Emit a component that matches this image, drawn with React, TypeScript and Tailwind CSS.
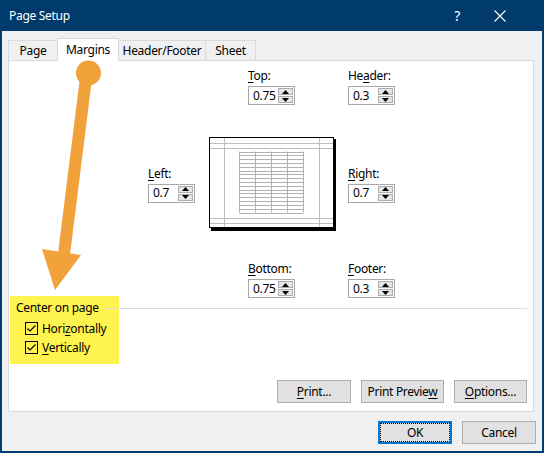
import React from "react";

const Acc = ({ text, at }: { text: string; at: number }) => (
  <span>
    {text.slice(0, at)}
    <span className="underline underline-offset-2">{text[at]}</span>
    {text.slice(at + 1)}
  </span>
);

const Arrow = ({ up }: { up?: boolean }) => (
  <svg width="7" height="4" viewBox="0 0 7 4">
    {up ? <polygon points="0,4 7,4 3.5,0" fill="#000" /> : <polygon points="0,0 7,0 3.5,4" fill="#000" />}
  </svg>
);

const Spin = ({ value }: { value: string }) => (
  <div className="flex h-[19px] w-[47px] items-center border border-[#a8a8a8] bg-white">
    <span className="flex-1 pl-[4px] text-[12px] leading-none">{value}</span>
    <div className="flex h-full w-[16px] flex-col gap-px py-px pr-px">
      <div className="flex flex-1 items-center justify-center border border-[#adadad] bg-[#e5e5e5]">
        <Arrow up />
      </div>
      <div className="flex flex-1 items-center justify-center border border-[#adadad] bg-[#e5e5e5]">
        <Arrow />
      </div>
    </div>
  </div>
);

const Field = ({ label, at, value }: { label: string; at: number; value: string }) => (
  <div className="flex flex-col">
    <div className="h-[16px] text-[12px] leading-[16px]">
      <Acc text={label} at={at} />
    </div>
    <div className="mt-[2px]">
      <Spin value={value} />
    </div>
  </div>
);

const Preview = () => {
  const rows = Array.from({ length: 17 }, (_, i) => 14.5 + i * (61 / 16));
  const cols = [30.5, 46.5, 62.5, 78.5, 94.5];
  return (
    <svg width="128" height="94" viewBox="0 0 128 94">
      <rect x="2" y="2" width="125" height="92" fill="#000" />
      <rect x="0.5" y="0.5" width="124" height="90" fill="#fff" stroke="#000" />
      <g stroke="#bdbdbd" strokeWidth="1">
        <line x1="15.5" y1="1" x2="15.5" y2="90" />
        <line x1="110.5" y1="1" x2="110.5" y2="90" />
        <line x1="1" y1="6.5" x2="124" y2="6.5" />
        <line x1="1" y1="11.5" x2="124" y2="11.5" />
        <line x1="1" y1="81.5" x2="124" y2="81.5" />
        <line x1="1" y1="86.5" x2="124" y2="86.5" />
      </g>
      <g stroke="#b3b3b3" strokeWidth="1">
        {rows.map((y, i) => (
          <line key={i} x1="30.5" y1={Math.round(y) + 0.5} x2="94.5" y2={Math.round(y) + 0.5} />
        ))}
        {cols.map((x, i) => (
          <line key={i} x1={x} y1="14.5" x2={x} y2="75.5" />
        ))}
      </g>
    </svg>
  );
};

const Button = ({ children, w, focused }: { children: React.ReactNode; w: string; focused?: boolean }) => (
  <div
    className={`flex h-[23px] items-center justify-center bg-[#e1e1e1] text-[12px] ${w} ${
      focused ? "border-2 border-[#0078d7]" : "border border-[#adadad]"
    }`}
  >
    {focused ? (
      <div className="flex h-full w-full items-center justify-center border border-dotted border-black">{children}</div>
    ) : (
      children
    )}
  </div>
);

const Tab = ({ label, w, active }: { label: string; w: string; active?: boolean }) =>
  active ? (
    <div
      className={`relative z-10 -mb-px flex h-[23px] items-center justify-center border border-b-0 border-[#d9d9d9] bg-white text-[12px] ${w}`}
    >
      {label}
    </div>
  ) : (
    <div
      className={`flex h-[20px] items-center justify-center border border-b-0 border-[#d9d9d9] bg-[#f0f0f0] pt-[1px] text-[12px] ${w}`}
    >
      {label}
    </div>
  );

export default function App() {
  return (
    <div className="relative flex h-[453px] w-[544px] flex-col bg-[#003b6b] font-['Noto_Sans',sans-serif] tracking-[-0.3px] text-black">
      {/* title bar */}
      <div className="flex h-[31px] items-center text-white">
        <span className="ml-[9px] flex-1 text-[12px]">Page Setup</span>
        <span className="mr-[34px] text-[14px]">?</span>
        <svg width="12" height="12" viewBox="0 0 12 12" className="mr-[38px]">
          <path d="M0.5 0.5 L11.5 11.5 M11.5 0.5 L0.5 11.5" stroke="#fff" strokeWidth="1.1" />
        </svg>
      </div>

      {/* body */}
      <div className="mx-[2px] mb-[2px] flex flex-1 flex-col bg-[#f0f0f0] pt-[7px]">
        <div className="flex items-end pl-[6px]">
          <Tab label="Page" w="w-[50px]" />
          <Tab label="Margins" w="w-[62px] -ml-px" active />
          <Tab label="Header/Footer" w="w-[88px] -ml-px" />
          <Tab label="Sheet" w="w-[51px] -ml-px" />
        </div>

        <div className="ml-[6px] mr-[8px] flex h-[352px] flex-col border border-[#d9d9d9] bg-white pt-[7px] pb-[8px]">
          {/* margins grid */}
          <div className="ml-[139px] grid grid-cols-[61px_139px_60px]">
            <div />
            <div className="pl-[39px]">
              <Field label="Top:" at={0} value="0.75" />
            </div>
            <Field label="Header:" at={2} value="0.3" />

            <div className="mt-[32px] self-center">
              <Field label="Left:" at={0} value="0.7" />
            </div>
            <div className="mt-[32px]">
              <Preview />
            </div>
            <div className="mt-[32px] self-center">
              <Field label="Right:" at={0} value="0.7" />
            </div>

            <div />
            <div className="mt-[30px] pl-[39px]">
              <Field label="Bottom:" at={0} value="0.75" />
            </div>
            <div className="mt-[30px]">
              <Field label="Footer:" at={0} value="0.3" />
            </div>
          </div>

          {/* center on page */}
          <div className="relative mt-[2px]">
            <div className="absolute left-[1px] top-[-4px] h-[68px] w-[109px] bg-[#fff34f]" />
            <div className="relative flex h-[16px] items-center pl-[7px]">
              <span className="text-[12px] leading-[16px]">Center on page</span>
              <div className="ml-[6px] mr-[6px] h-px flex-1 bg-[#dcdcdc]" />
            </div>
            <div className="relative mt-[3px] flex flex-col pl-[16px]">
              {[
                { t: "Horizontally", a: 4 },
                { t: "Vertically", a: 0 },
              ].map((c) => (
                <div key={c.t} className="flex h-[19px] items-center">
                  <svg width="13" height="13" viewBox="0 0 13 13">
                    <rect x="0.5" y="0.5" width="12" height="12" fill="none" stroke="#000" />
                    <path d="M2.5 6.5 L5 9 L10.5 3.5" fill="none" stroke="#000" strokeWidth="1.2" />
                  </svg>
                  <span className="ml-[4px] text-[12px]">
                    <Acc text={c.t} at={c.a} />
                  </span>
                </div>
              ))}
            </div>
          </div>

          <div className="mt-auto flex justify-end gap-[10px] pr-[6px]">
            <Button w="w-[74px]">
              <Acc text="Print..." at={0} />
            </Button>
            <Button w="w-[83px]">
              <Acc text="Print Preview" at={12} />
            </Button>
            <Button w="w-[73px]">
              <Acc text="Options..." at={0} />
            </Button>
          </div>
        </div>

        <div className="flex flex-1 items-start justify-end gap-[10px] pr-[6px] pt-[9px]">
          <Button w="w-[74px]" focused>
            OK
          </Button>
          <Button w="w-[74px]">Cancel</Button>
        </div>
      </div>

      {/* annotation arrow */}
      <svg className="pointer-events-none absolute inset-0 z-20" width="544" height="453" viewBox="0 0 544 453">
        <line x1="86" y1="78" x2="64" y2="254" stroke="#f2a23a" strokeWidth="12" />
        <circle cx="88.5" cy="73" r="12.5" fill="#f2a23a" />
        <polygon points="42,249 81,255 55,290" fill="#f2a23a" />
      </svg>
    </div>
  );
}
